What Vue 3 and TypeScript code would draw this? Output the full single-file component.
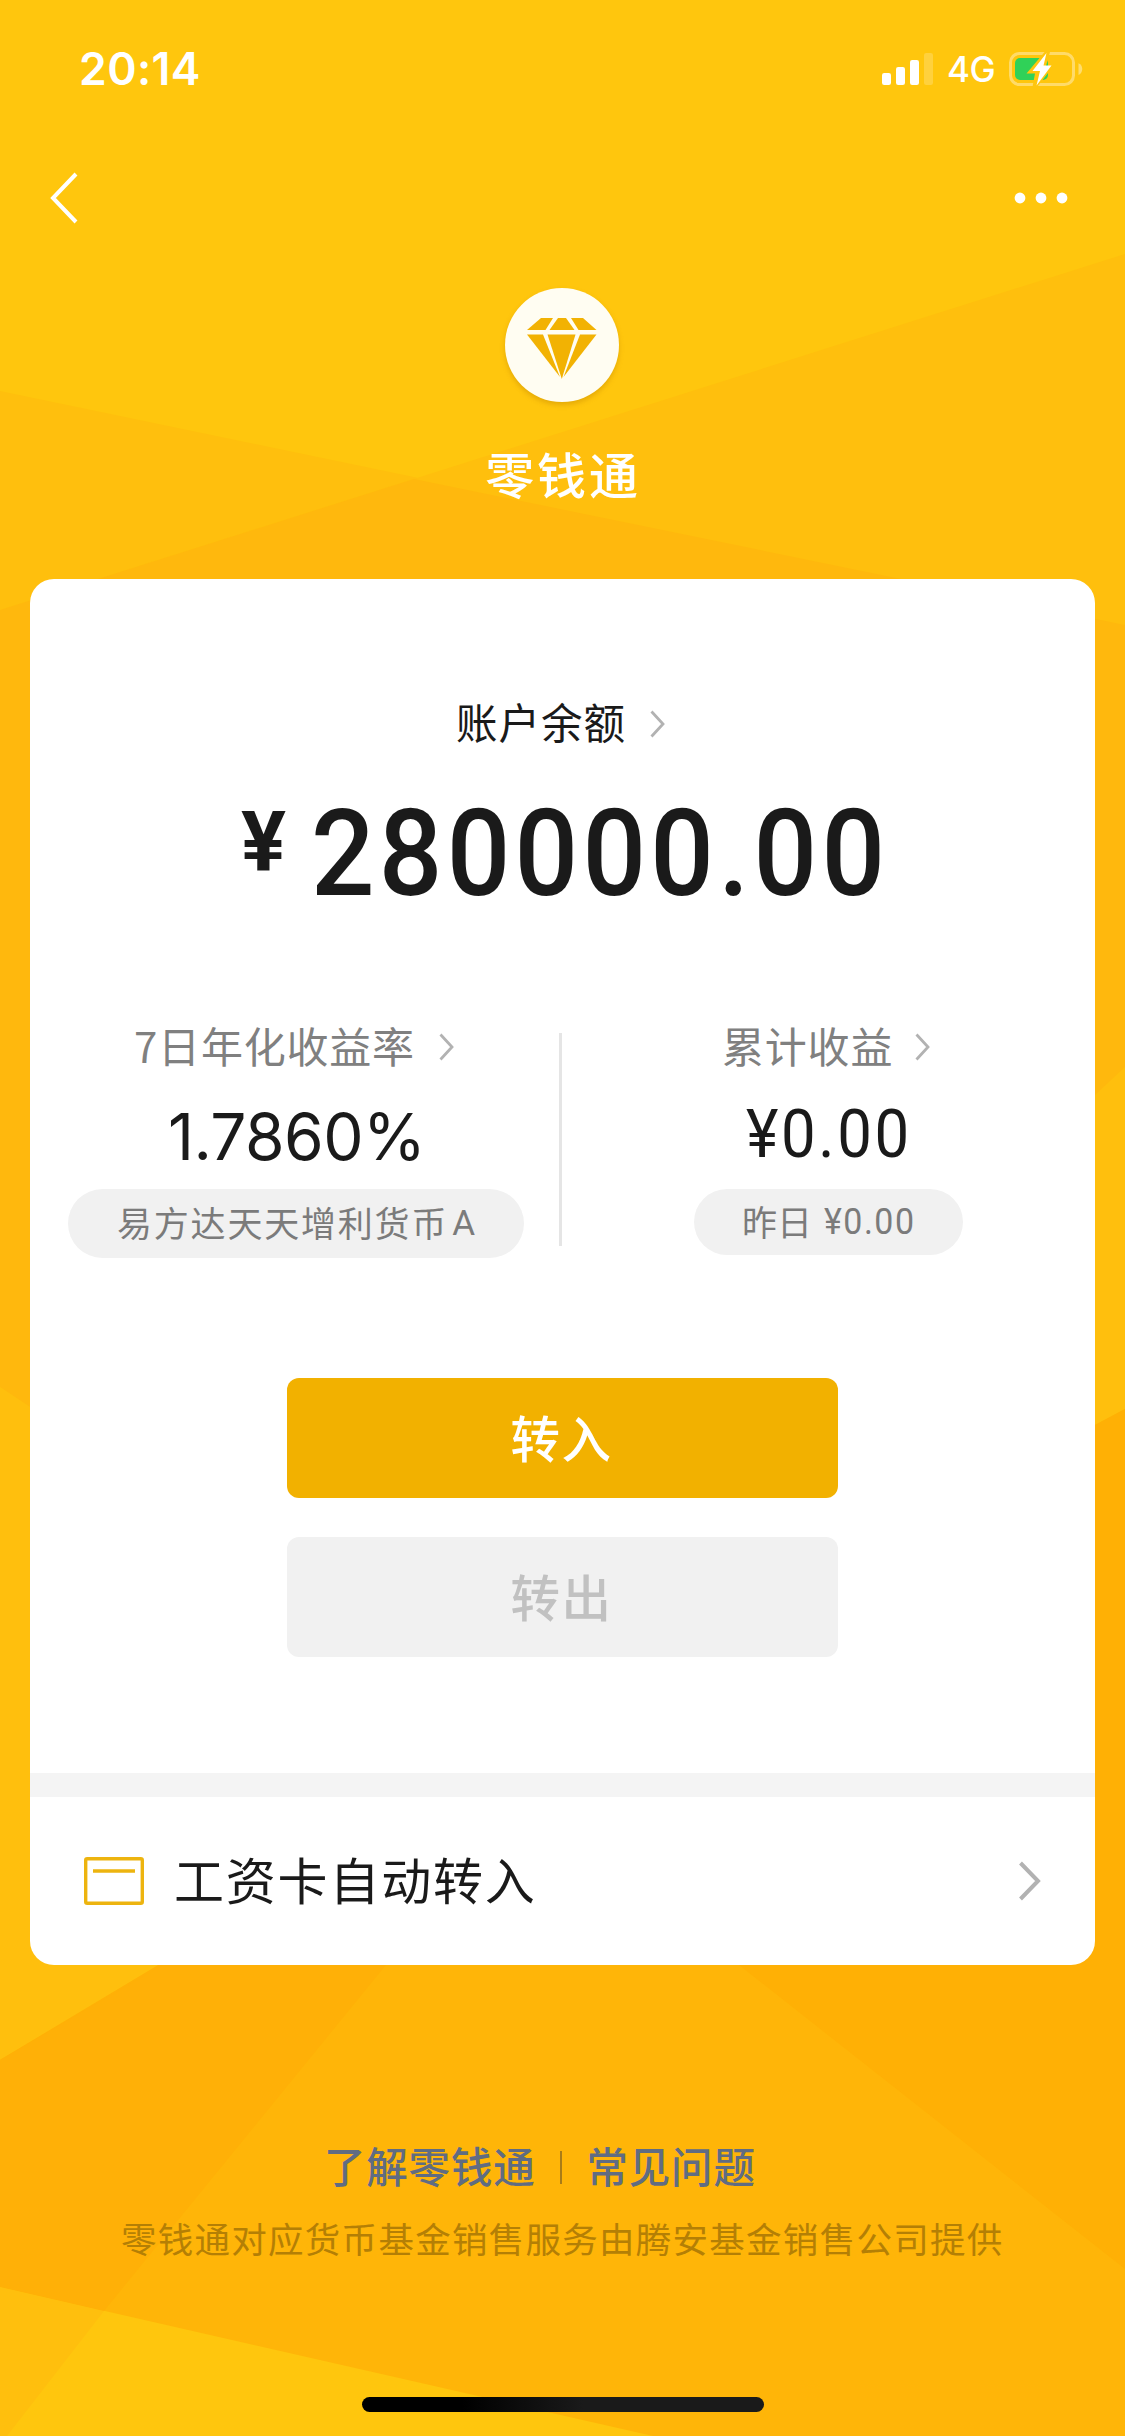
<script setup lang="ts">
interface Metric {
  label: string
  value: string
  kind: 'rate' | 'money'
}

const rate: Metric = { label: '7日年化收益率', value: '1.7860%', kind: 'rate' }
const earned: Metric = { label: '累计收益', value: '¥0.00', kind: 'money' }
const fund = { name: '易方达天天增利货币', series: 'A' }
const yesterday = { label: '昨日', value: '¥0.00' }
</script>

<template>
  <main class="page">
    <svg class="facets" viewBox="0 0 1125 2436" aria-hidden="true">
      <rect width="1125" height="2436" fill="#ffc60d" />
      <path d="M0 391 1125 625V1409L0 1640Z" fill="#ffbf0d" />
      <path d="M1125 254 0 610V1640L1125 1500Z" fill="#ffbf0d" />
      <path d="M0 610 414 479 1125 625V1067L1095 1095 600 1500 30 1407 0 1387Z" fill="#ffb80d" />
      <path d="M0 1387 30 1407 600 1500 1125 1650V2100L0 2060Z" fill="#ffbf0d" />
      <path d="M1125 1409 800 1580 600 1700 0 2060V2287L653 2436H1125Z" fill="#ffb508" />
      <path d="M0 2060 300 1880H415L103 2311 0 2287Z" fill="#ffb007" />
      <path d="M386 1965 104 2311 0 2287V2060L163 1965Z" fill="#ffb007" />
      <path d="M0 2287 104 2311 7 2436H0Z" fill="#ffbf0d" />
      <path d="M1125 1409 1060 1444 680 1900 739 1965 1125 2269Z" fill="#ffb005" />
    </svg>

    <header class="status">
      <span class="time">20:14</span>
      <div class="status-right">
        <svg class="signal" viewBox="0 0 51 32" width="51" height="32">
          <rect x="0" y="20" width="9" height="12" rx="2.2" fill="#fff" />
          <rect x="14" y="14" width="9" height="18" rx="2.2" fill="#fff" />
          <rect x="28" y="7" width="9" height="25" rx="2.2" fill="#fff" />
          <rect x="42" y="0" width="9" height="32" rx="2.2" fill="#fff" opacity=".2" />
        </svg>
        <span class="network">4G</span>
        <svg class="battery" viewBox="0 0 74 36" width="74" height="36">
          <rect x="1.5" y="2.5" width="63" height="31" rx="9" fill="none" stroke="#fff" stroke-opacity=".38" stroke-width="3" />
          <path d="M69.5 12.2C74.5 14 74.5 22 69.5 24Z" fill="#fff" fill-opacity=".4" />
          <rect x="6" y="7" width="33" height="22" rx="5" fill="#30d158" />
          <path d="M36 0.500 17.500 22.500H26L23.500 36H28L44.500 15H37L41 1Z" fill="#ffc60d" />
          <path d="M37.500 2 23.500 20H31L27.500 34.500 42.500 14.500H34.500Z" fill="#fff" />
        </svg>
      </div>
    </header>

    <nav class="nav">
      <svg viewBox="0 0 30 54" width="30" height="54">
        <path d="M27 3 4 27 27 51" fill="none" stroke="#fff" stroke-width="4" />
      </svg>
      <svg viewBox="0 0 54 12" width="54" height="12" fill="#fff">
        <circle cx="6" cy="6" r="5.4" />
        <circle cx="27" cy="6" r="5.4" />
        <circle cx="48" cy="6" r="5.4" />
      </svg>
    </nav>

    <section class="brand">
      <div class="badge">
        <svg viewBox="0 0 70 62" width="70" height="62" fill="#f2b203">
          <path d="M14 0H26L18.500 12H0Z" />
          <path d="M31 0H39L47.500 12H22.500Z" />
          <path d="M44 0H56L69.500 12H51.500Z" />
          <path d="M0 16.500H16L33 59Z" />
          <path d="M20.500 16.500H48.500L34.800 61Z" />
          <path d="M53 16.500H69.500L36.500 59Z" />
        </svg>
      </div>
      <h1>零钱通</h1>
    </section>

    <section class="card">
      <div class="balance-label">
        <span>账户余额</span>
        <svg class="chev" viewBox="0 0 15 28" width="15" height="28"><path d="M1.500 1.500 13 14 1.500 26.500" /></svg>
      </div>
      <div class="balance">
        <span class="yen">¥</span>
        <span class="digits">280000.00</span>
      </div>

      <div class="metrics">
        <div class="metric left">
          <div class="metric-label">
            <span>{{ rate.label }}</span>
            <svg class="chev" viewBox="0 0 15 28" width="15" height="28"><path d="M1.500 1.500 13 14 1.500 26.500" /></svg>
          </div>
          <div class="value" :class="rate.kind">{{ rate.value }}</div>
          <div class="pill fund"><span>{{ fund.name }}</span><i>{{ fund.series }}</i></div>
        </div>
        <div class="divider"></div>
        <div class="metric right">
          <div class="metric-label">
            <span>{{ earned.label }}</span>
            <svg class="chev" viewBox="0 0 15 28" width="15" height="28"><path d="M1.500 1.500 13 14 1.500 26.500" /></svg>
          </div>
          <div class="value" :class="earned.kind">{{ earned.value }}</div>
          <div class="pill day"><span>{{ yesterday.label }}</span><b>{{ yesterday.value }}</b></div>
        </div>
      </div>

      <div class="actions">
        <button class="btn primary">转入</button>
        <button class="btn muted">转出</button>
      </div>

      <div class="gap"></div>
      <div class="row">
        <svg viewBox="0 0 60 48" width="60" height="48" fill="none" stroke="#edb40f">
          <rect x="1.700" y="1.700" width="56.600" height="44.600" rx="1.500" stroke-width="3.400" />
          <path d="M9 14H51" stroke-width="3.600" />
        </svg>
        <span class="row-text">工资卡自动转入</span>
        <svg class="row-chev" viewBox="0 0 22 40" width="22" height="40">
          <path d="M1.500 2 19 20 1.500 38" fill="none" stroke="#b2b2b2" stroke-width="4" />
        </svg>
      </div>
    </section>

    <footer class="footer">
      <div class="links">
        <a>了解零钱通</a>
        <span class="bar"></span>
        <a>常见问题</a>
      </div>
      <p>零钱通对应货币基金销售服务由腾安基金销售公司提供</p>
    </footer>

    <div class="home"></div>
  </main>
</template>

<style>
body {
  margin: 0;
}
</style>

<style scoped>
.page {
  position: relative;
  display: flex;
  flex-direction: column;
  width: 1125px;
  height: 2436px;
  overflow: hidden;
  background: #ffc60d;
  font-family: "Noto Sans CJK SC", sans-serif;
  color: #1a1a1a;
}
.page > * {
  position: relative;
  flex: none;
}
.page > .facets {
  position: absolute;
  top: 0;
  left: 0;
  width: 1125px;
  height: 2436px;
}
svg {
  display: block;
  flex: none;
}
span,
a,
i,
b {
  white-space: nowrap;
}

.status {
  display: flex;
  justify-content: space-between;
  align-items: center;
  height: 138px;
  box-sizing: border-box;
  padding: 0 42px 0 79px;
  color: #fff;
  font-family: Inter, sans-serif;
}
.time {
  font-size: 44.5px;
  font-weight: 600;
  letter-spacing: 0.4px;
}
.status-right {
  display: flex;
  align-items: center;
}
.network {
  width: 62px;
  padding-left: 14px;
  font-size: 35px;
  font-weight: 500;
  line-height: 40px;
  letter-spacing: -0.5px;
  box-sizing: content-box;
}

.nav {
  display: flex;
  justify-content: space-between;
  align-items: center;
  height: 120px;
  padding: 0 57px 0 49px;
}

.brand {
  display: flex;
  flex-direction: column;
  align-items: center;
  height: 321px;
  box-sizing: border-box;
  padding: 30px 1px 0 0;
}
.badge {
  display: flex;
  justify-content: center;
  width: 114px;
  height: 114px;
  box-sizing: border-box;
  padding-top: 30px;
  border-radius: 50%;
  background: #fffdf2;
  box-shadow: 0 3px 5px rgba(190, 130, 0, 0.4);
}
h1 {
  margin: 35px 0 0 2px;
  color: #fff;
  font-size: 49px;
  font-weight: 500;
  line-height: 72px;
  letter-spacing: 2.8px;
}

.card {
  display: flex;
  flex-direction: column;
  width: 1065px;
  height: 1386px;
  margin: 0 30px;
  border-radius: 24px;
  background: #fff;
  overflow: hidden;
}
.balance-label {
  display: flex;
  align-items: center;
  height: 60px;
  margin-top: 115px;
  padding-left: 426px;
  font-size: 41.5px;
  letter-spacing: 1px;
}
.balance-label span,
.metric-label span {
  padding-bottom: 6px;
}
.chev {
  margin-left: 24px;
  fill: none;
  stroke: #b2b2b2;
  stroke-width: 2.8;
}
.balance {
  display: flex;
  height: 116px;
  margin-top: 30px;
  padding-left: 211px;
  font-family: Roboto, sans-serif;
  font-weight: 700;
}
.yen {
  width: 70px;
  font-size: 84px;
  line-height: 117px;
}
.digits {
  font-size: 121px;
  font-weight: 500;
  line-height: 140px;
  letter-spacing: 4.6px;
  transform: scaleX(0.925);
  transform-origin: left center;
}

.metrics {
  display: flex;
  height: 264px;
  margin-top: 112px;
}
.metric {
  display: flex;
  flex-direction: column;
}
.metric.left {
  width: 529px;
}
.metric.right {
  flex: 1;
}
.metric-label {
  display: flex;
  align-items: center;
  height: 60px;
  margin-top: 5px;
  color: #808080;
  font-size: 42px;
  letter-spacing: 0.8px;
}
.left .metric-label {
  padding-left: 104px;
}
.right .metric-label {
  padding-left: 160px;
}
.right .metric-label .chev {
  margin-left: 22px;
}
.value {
  height: 80px;
  line-height: 80px;
}
.rate {
  margin: 20px 0 12px;
  padding-left: 138px;
  font-family: Inter, sans-serif;
  font-size: 64px;
  letter-spacing: -0.6px;
}
.money {
  margin: 18px 0 14px 184px;
  font-family: Roboto, sans-serif;
  font-size: 66px;
  letter-spacing: 2.8px;
  transform: scaleX(0.935);
  transform-origin: left center;
}
.divider {
  width: 3px;
  height: 213px;
  margin-top: 21px;
  background: #e5e5e5;
}
.pill {
  display: flex;
  align-items: center;
  box-sizing: border-box;
  padding-bottom: 4px;
  border-radius: 36px;
  background: #f1f1f1;
  color: #7b7b7b;
  font-size: 35px;
}
.pill i,
.pill b {
  font-family: Roboto, sans-serif;
  font-style: normal;
  font-weight: 400;
}
.fund {
  width: 456px;
  height: 69px;
  margin-left: 38px;
  padding-left: 49px;
  letter-spacing: 1.8px;
}
.fund i {
  margin-left: 4px;
  padding-top: 3px;
}
.day {
  width: 269px;
  height: 66px;
  margin-left: 132px;
  padding-left: 48px;
}
.day b {
  margin-left: 12px;
  padding-top: 2px;
  font-size: 36.5px;
  letter-spacing: 1.6px;
  transform: scaleX(0.93);
  transform-origin: left center;
}

.actions {
  display: flex;
  flex-direction: column;
  align-items: center;
  gap: 39px;
  height: 395px;
  margin-top: 102px;
}
.btn {
  width: 551px;
  height: 120px;
  flex: none;
  border: 0;
  border-radius: 12px;
  padding: 0 2px 4px 0;
  font: 500 49.5px "Noto Sans CJK SC", sans-serif;
  letter-spacing: 1.5px;
}
.primary {
  background: #f2b100;
  color: #fff;
}
.muted {
  background: #f1f1f1;
  color: #c1c1c1;
}
.gap {
  height: 24px;
  background: #f4f4f4;
}
.row {
  display: flex;
  align-items: center;
  height: 168px;
  padding: 0 54px;
}
.row-text {
  flex: 1;
  margin-left: 30px;
  padding-bottom: 6px;
  font-size: 50px;
  letter-spacing: 1.8px;
}

.footer {
  height: 432px;
  box-sizing: border-box;
  padding-top: 170px;
}
.links {
  display: flex;
  align-items: center;
  height: 64px;
  padding-left: 324px;
  color: #606c82;
  font-size: 41.5px;
  font-weight: 500;
  letter-spacing: 0.8px;
}
.links a {
  padding-bottom: 5px;
}
.bar {
  width: 2px;
  height: 33px;
  margin: 0 25px 0 24px;
  background: #a97c18;
}
p {
  margin: 11px 0 0 121px;
  color: #b47f05;
  font-size: 35.5px;
  line-height: 56px;
  letter-spacing: 1.27px;
  white-space: nowrap;
}
.home {
  width: 402px;
  height: 15px;
  margin-left: 362px;
  border-radius: 8px;
  background: linear-gradient(90deg, #000 25%, #1a1a1a 55%);
}
</style>
